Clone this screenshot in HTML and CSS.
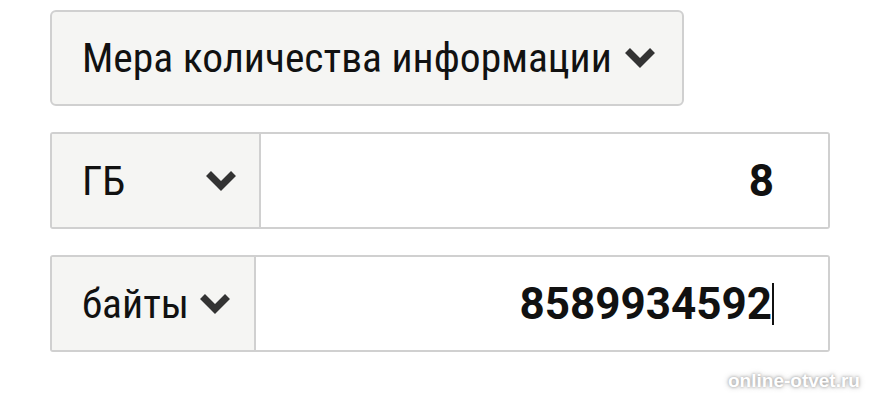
FILE: index.html
```html
<!DOCTYPE html>
<html lang="ru">
<head>
<meta charset="utf-8">
<link rel="stylesheet" href="styles.css">
</head>
<body>
<div class="page">
  <div class="measure">
    <span class="label">Мера количества информации</span>
    <svg class="chev" viewBox="0 0 32 22" width="32" height="22"><polyline points="3.5,3.5 16,16 28.5,3.5"/></svg>
  </div>
  <div class="row">
    <div class="unit unit-fixed">
      <span class="label">ГБ</span>
      <svg class="chev" viewBox="0 0 32 22" width="32" height="22"><polyline points="3.5,3.5 16,16 28.5,3.5"/></svg>
    </div>
    <div class="value"><span class="num">8</span></div>
  </div>
  <div class="row">
    <div class="unit">
      <span class="label">байты</span>
      <svg class="chev" viewBox="0 0 32 22" width="32" height="22"><polyline points="3.5,3.5 16,16 28.5,3.5"/></svg>
    </div>
    <div class="value"><span class="num">8589934592</span><span class="caret"></span></div>
  </div>
</div>
<div class="watermark">online-otvet.ru</div>
</body>
</html>
```
FILE: styles.css
```css
html, body {
  margin: 0;
  padding: 0;
  background: #fff;
  font-family: Roboto, "Noto Sans", sans-serif;
  color: #111;
}
.page {
  padding: 10px 0 0 50px;
  display: flex;
  flex-direction: column;
  align-items: flex-start;
  gap: 26px;
}
.measure {
  box-sizing: border-box;
  width: 634px;
  height: 96px;
  border: 2px solid #d0d0d0;
  border-radius: 6px;
  background: #f5f5f3;
  display: flex;
  align-items: center;
  padding-left: 30px;
  gap: 12px;
}
.label {
  font-size: 41.5px;
  font-stretch: 86%;
  line-height: 1;
  white-space: nowrap;
  color: #111;
}
.chev {
  flex: none;
  fill: none;
  stroke: #333;
  stroke-width: 7;
  stroke-linejoin: miter;
  stroke-linecap: butt;
}
.row {
  box-sizing: border-box;
  width: 780px;
  height: 97px;
  border: 2px solid #d0d0d0;
  border-radius: 3px;
  display: flex;
}
.unit {
  background: #f5f5f3;
  border-right: 2px solid #d0d0d0;
  display: flex;
  align-items: center;
  padding: 0 23px 0 30px;
  gap: 10px;
}
.unit-fixed {
  box-sizing: border-box;
  width: 209px;
  justify-content: space-between;
  padding-right: 22px;
}
.value {
  flex: 1;
  background: #fff;
  display: flex;
  align-items: center;
  justify-content: flex-end;
  padding-right: 54px;
}
.num {
  font-size: 44px;
  font-weight: 700;
  color: #111;
  line-height: 1;
}
.caret {
  width: 2px;
  height: 42px;
  background: #111;
}
.watermark {
  position: absolute;
  left: 728px;
  top: 370px;
  font-family: "Liberation Sans", Arial, sans-serif;
  font-weight: 700;
  font-size: 19px;
  color: #fff;
  text-shadow: 0 0 3px #999, 0 0 6px #bbb;
}
```
